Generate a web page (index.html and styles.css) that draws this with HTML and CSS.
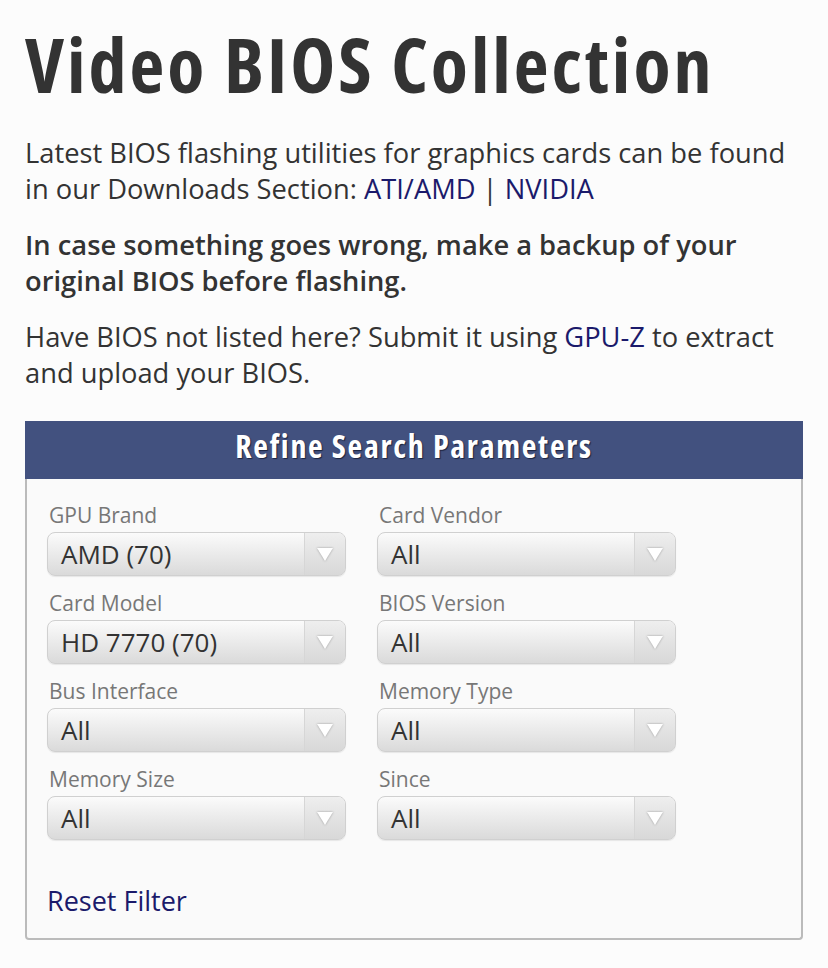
FILE: index.html
```html
<!DOCTYPE html>
<html lang="en">

<head>
    <meta charset="UTF-8">
    <meta name="viewport" content="width=device-width, initial-scale=1.0">
    <title>Video BIOS Collection</title>
    <link rel="stylesheet" href="styles.css">
</head>

<body>
    <div class="page">
        <h1>Video BIOS Collection</h1>

        <p>Latest BIOS flashing utilities for graphics cards can be found in our Downloads Section: <a href="#">ATI/AMD</a> | <a href="#">NVIDIA</a></p>
        <p><strong>In case something goes wrong, make a backup of your original BIOS before flashing.</strong></p>
        <p>Have BIOS not listed here? Submit it using <a href="#">GPU-Z</a> to extract and upload your BIOS.</p>

        <div class="panel">
            <div class="panel-title">Refine Search Parameters</div>
            <div class="panel-body">
                <div class="filters">
                    <div class="filter">
                        <label>GPU Brand</label>
                        <div class="select"><span>AMD (70)</span><i class="arrow"></i></div>
                    </div>
                    <div class="filter">
                        <label>Card Vendor</label>
                        <div class="select"><span>All</span><i class="arrow"></i></div>
                    </div>
                    <div class="filter">
                        <label>Card Model</label>
                        <div class="select"><span>HD 7770 (70)</span><i class="arrow"></i></div>
                    </div>
                    <div class="filter">
                        <label>BIOS Version</label>
                        <div class="select"><span>All</span><i class="arrow"></i></div>
                    </div>
                    <div class="filter">
                        <label>Bus Interface</label>
                        <div class="select"><span>All</span><i class="arrow"></i></div>
                    </div>
                    <div class="filter">
                        <label>Memory Type</label>
                        <div class="select"><span>All</span><i class="arrow"></i></div>
                    </div>
                    <div class="filter">
                        <label>Memory Size</label>
                        <div class="select"><span>All</span><i class="arrow"></i></div>
                    </div>
                    <div class="filter">
                        <label>Since</label>
                        <div class="select"><span>All</span><i class="arrow"></i></div>
                    </div>
                </div>
                <a href="#" class="reset">Reset Filter</a>
            </div>
        </div>
    </div>
</body>

</html>
```

FILE: styles.css
```css
body {
    font-family: 'Open Sans', sans-serif;
    background-color: #fcfcfc;
    color: #333;
    margin: 0;
}

.page {
    padding: 20px 25px 27px 25px;
}

h1 {
    font-size: 76px;
    font-weight: 700;
    font-stretch: 75%;
    letter-spacing: 3px;
    line-height: 88px;
    margin: 0 0 27px 0;
    color: #333;
}

p {
    font-size: 27.3px;
    line-height: 36px;
    margin: 0 0 20px 0;
}

p strong {
    font-weight: 600;
}

a {
    color: #1b1a6b;
    text-decoration: none;
}

.panel {
    margin-top: 30px;
}

.panel-title {
    background-color: #42517f;
    color: #fff;
    text-align: center;
    font-size: 32px;
    font-weight: 700;
    font-stretch: 75%;
    letter-spacing: 1.7px;
    height: 58px;
    line-height: 50px;
    padding-bottom: 8px;
    box-sizing: border-box;
    text-shadow: 1px 1px 1px #1c2440;
}

.panel-body {
    background-color: #fafafa;
    border: 2px solid #bbb;
    border-top: none;
    border-radius: 0 0 4px 4px;
    padding: 22px 20px 19px 20px;
}

.filters {
    display: grid;
    grid-template-columns: 299px 299px;
    column-gap: 31px;
    row-gap: 13px;
}

.filter label {
    display: block;
    font-size: 21px;
    line-height: 28px;
    margin-bottom: 3px;
    padding-left: 2px;
    color: #777;
}

.select {
    display: flex;
    align-items: center;
    height: 44px;
    box-sizing: border-box;
    border: 1px solid #d0d0d0;
    border-radius: 8px;
    background: linear-gradient(#fbfbfb, #dadada);
    box-shadow: 0 1px 1px rgba(0, 0, 0, 0.08);
    font-size: 26px;
    color: #333;
}

.select span {
    flex: 1;
    padding-left: 13px;
}

.arrow {
    width: 40px;
    height: 100%;
    border-left: 1px solid #d6d6d6;
    background: linear-gradient(#eee, #d8d8d8);
    border-radius: 0 7px 7px 0;
    position: relative;
}

.arrow::after {
    content: "";
    position: absolute;
    left: 12px;
    top: 15px;
    border-left: 8px solid transparent;
    border-right: 8px solid transparent;
    border-top: 13px solid #fff;
    filter: drop-shadow(0 0 1px #999);
}

.reset {
    display: inline-block;
    margin-top: 43px;
    font-size: 27px;
    line-height: 36px;
}
```
